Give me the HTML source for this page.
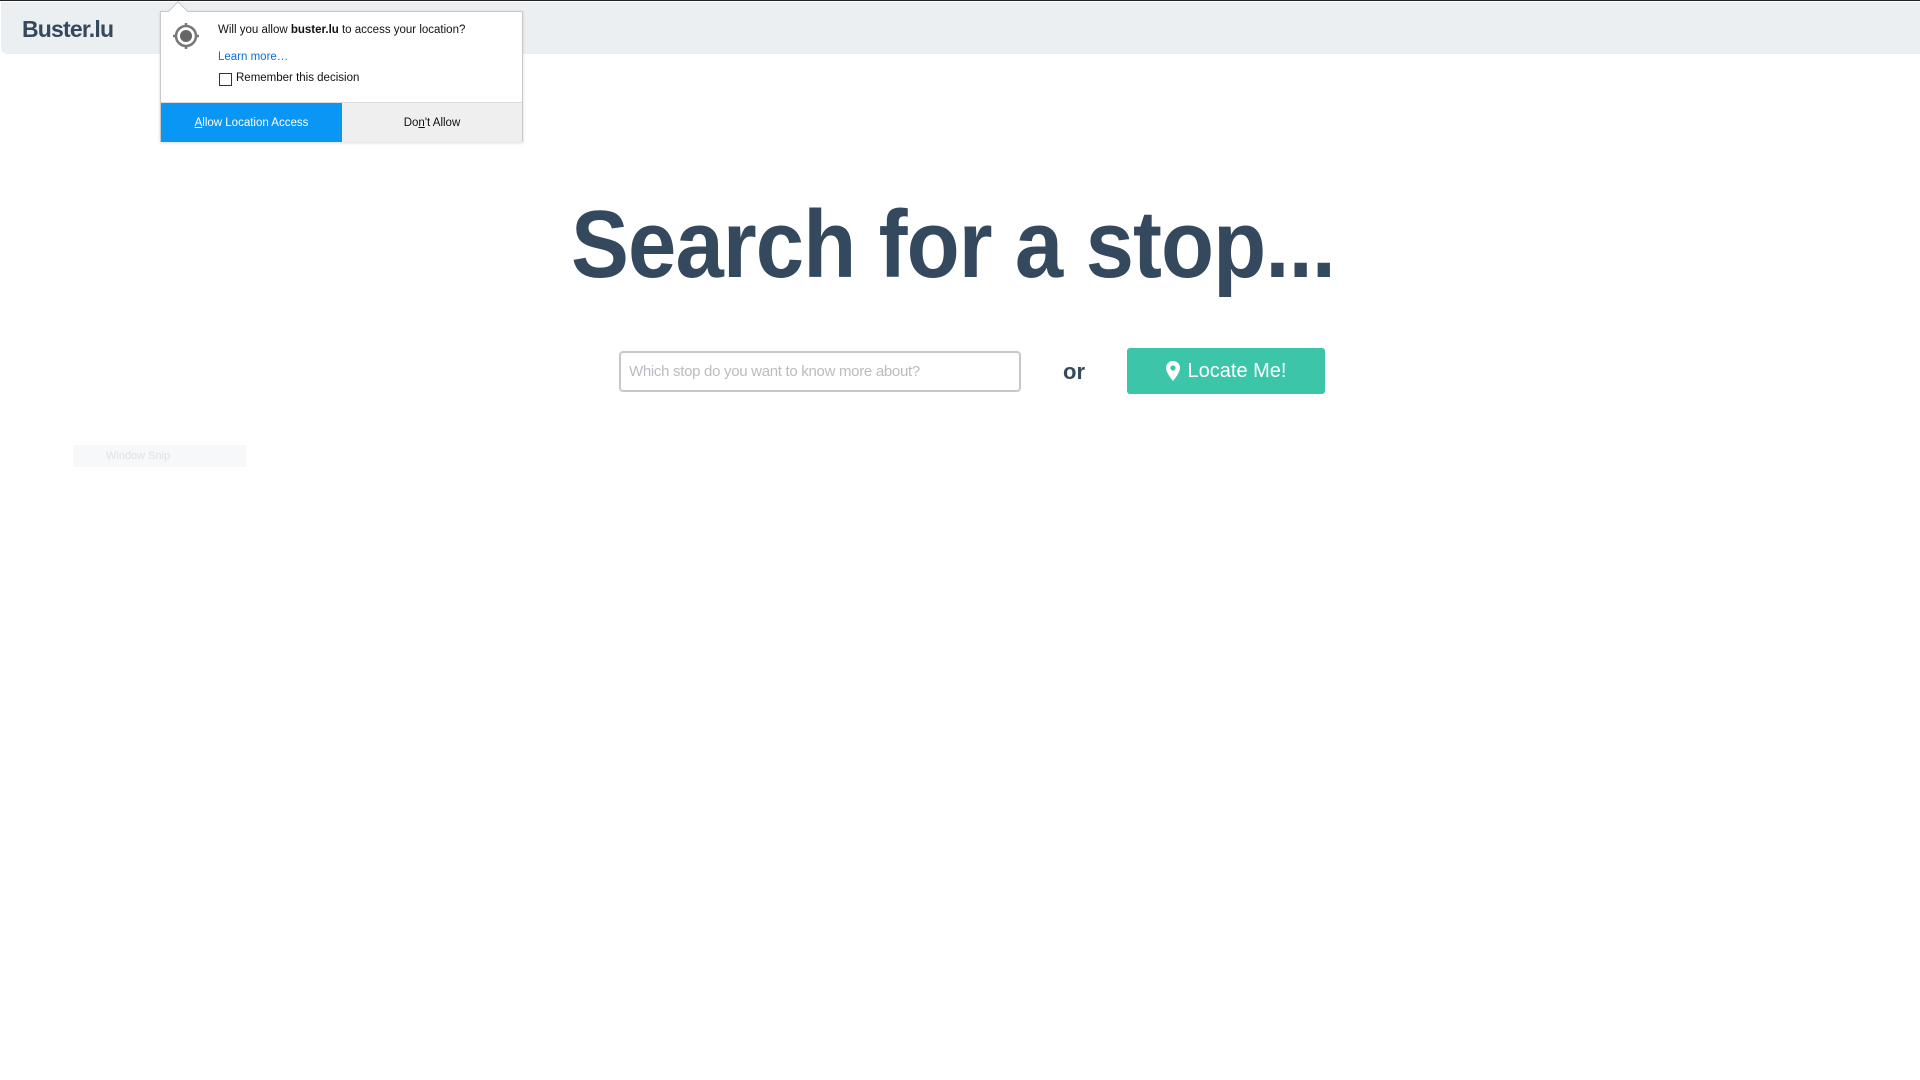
<!DOCTYPE html>
<html><head><meta charset="utf-8"><style>
*{margin:0;padding:0;box-sizing:border-box}
body{width:1920px;height:1080px;background:#fff;font-family:"Liberation Sans",sans-serif;position:relative;overflow:hidden;border-top:1px solid #222}
.nav{position:absolute;left:1px;top:1px;width:1919px;height:52px;background:#eceff1;border-bottom-left-radius:6px}
.logo{position:absolute;left:21px;top:14px;font-size:23px;font-weight:bold;color:#34495e;letter-spacing:-0.8px}
.pop{position:absolute;left:160px;top:10px;width:363px;height:131px;background:#fff;border:1px solid #c8c8c8;box-shadow:0 1px 3px rgba(0,0,0,.15);font-size:11.5px;color:#111}
.pop .arrow{position:absolute;left:10px;top:-8px;width:14px;height:14px;background:#fff;border-left:1px solid #c8c8c8;border-top:1px solid #c8c8c8;transform:rotate(45deg)}
.btns{position:absolute;left:0;top:90px;width:361px;height:40px;border-top:1px solid #ddd;display:flex}
.b1{width:181px;background:#0a96f5;color:#fff;display:flex;align-items:center;justify-content:center}
.b2{flex:1;background:#efefef;display:flex;align-items:center;justify-content:center}
h1{position:absolute;left:571px;top:189px;font-size:96px;font-weight:bold;color:#34495e;transform:scaleX(0.905);transform-origin:left top;white-space:nowrap;letter-spacing:-1px}
.inp{position:absolute;left:619px;top:350px;width:402px;height:41px;border:2px solid #c5c9cc;border-radius:4px;color:#b8bcc0;font-size:15px;padding:10px 8px;letter-spacing:-0.3px}
.or{position:absolute;left:1063px;top:358px;font-size:22px;font-weight:bold;color:#34495e}
.btn{position:absolute;left:1127px;top:347px;width:198px;height:46px;background:#3cc5a9;border-radius:3px;color:#fff;font-size:20px;display:flex;align-items:center;justify-content:center;gap:8px}
.snip{position:absolute;left:73px;top:444px;width:173px;height:22px;background:#f6f8fa;color:#dde2e6;font-size:11px;padding:5px 0 0 33px}
</style></head><body>
<div class="nav"><div class="logo">Buster.lu</div></div>
<div class="pop"><div class="arrow"></div>
<svg style="position:absolute;left:11px;top:10px" width="28" height="28" viewBox="0 0 28 28"><circle cx="14" cy="14" r="10" fill="none" stroke="#777" stroke-width="2.5"/><circle cx="14" cy="14" r="6" fill="#666"/><path d="M14 1v4M14 23v4M1 14h4M23 14h4" stroke="#777" stroke-width="2.5"/></svg>
<div style="position:absolute;left:57px;top:12px">Will you allow <b>buster.lu</b> to access your location?</div>
<div style="position:absolute;left:57px;top:39px;color:#0a6dd8">Learn more…</div>
<div style="position:absolute;left:58px;top:61px;width:13px;height:13px;border:1px solid #333"></div>
<div style="position:absolute;left:75px;top:60px">Remember this decision</div>
<div class="btns"><div class="b1"><u>A</u>llow Location Access</div><div class="b2">Do<u>n</u>'t Allow</div></div>
</div>
<h1>Search for a stop...</h1>
<div class="inp">Which stop do you want to know more about?</div>
<div class="or">or</div>
<div class="btn"><svg width="14" height="20" viewBox="0 0 14 20"><path d="M7 0C3 0 0 3 0 7c0 5 7 13 7 13s7-8 7-13c0-4-3-7-7-7z" fill="#fff"/><circle cx="7" cy="7" r="2.6" fill="#3cc5a9"/></svg>Locate Me!</div>
<div class="snip">Window Snip</div>
</body></html>
